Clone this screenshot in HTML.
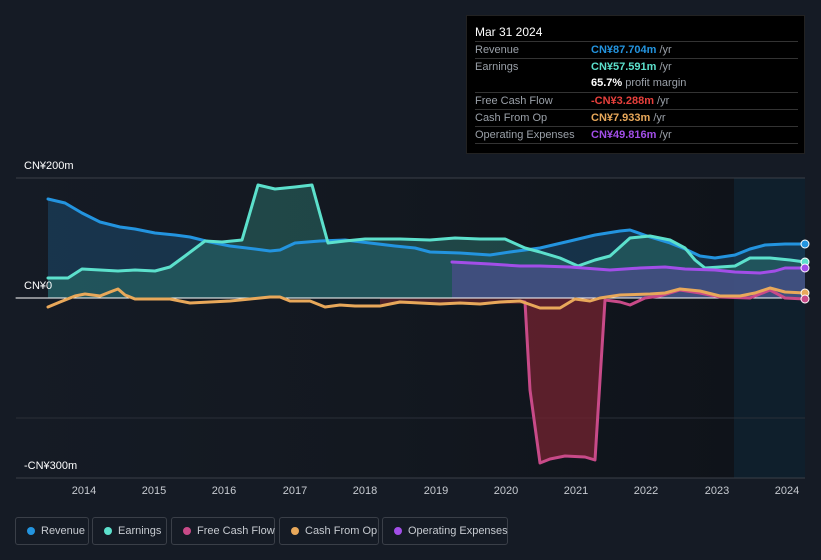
<!DOCTYPE html>
<html><head><meta charset="utf-8"><style>
html,body{margin:0;width:821px;height:560px;overflow:hidden}
body{background:#151b25;font-family:"Liberation Sans",sans-serif;position:relative}
.tt{position:absolute;left:466px;top:15px;width:339px;height:139px;background:#000;border:1px solid #222;box-sizing:border-box;color:#9aa0a8;font-size:11px}
.tt .h{color:#fff;font-size:12px;position:absolute;left:8px;top:9px}
.row{position:absolute;left:8px;right:6px;height:17px;border-top:1px solid #333;line-height:17px;white-space:nowrap}
.row .v{position:absolute;left:116px;top:0;font-weight:bold}
.row .v span{color:#9aa0a8;font-weight:normal}
.lg{position:absolute;top:517px;height:28px;border:1px solid #3a3f48;border-radius:3px;box-sizing:border-box;color:#c6cad0;font-size:11px;line-height:26px;padding-left:25px;white-space:nowrap}
.lg i{position:absolute;left:11px;top:9px;width:8px;height:8px;border-radius:50%}
.ax{position:absolute;color:#fff;font-size:11px}
.yr{position:absolute;top:485px;color:#c6cad0;font-size:11px;transform:translateX(-50%)}
</style></head><body>
<svg width="821" height="560" style="position:absolute;left:0;top:0">
<defs>
<linearGradient id="bg" x1="0" x2="1"><stop offset="0" stop-color="#151b25"/><stop offset="0.5" stop-color="#131820"/><stop offset="1" stop-color="#0f131a"/></linearGradient>
</defs>
<rect x="16" y="178" width="718" height="300" fill="url(#bg)"/>
<rect x="734" y="178" width="71" height="300" fill="#0f1f2c"/>
<line x1="16" y1="178" x2="805" y2="178" stroke="#3a3f48"/>
<line x1="16" y1="418" x2="805" y2="418" stroke="#2a2f38"/>
<line x1="16" y1="478" x2="805" y2="478" stroke="#3a3f48"/>
<path d="M48,199 L65,203 82,213 100,222 120,227 135,229 155,233 175,235 190,237 210,242 230,246 255,249 270,251 280,250 295,243 320,241 345,240 370,243 395,246 415,248 430,252 460,253 490,255 510,252 540,248 570,241 595,235 620,231 630,230 650,237 670,243 685,249 700,256 715,258 735,255 750,249 765,245 785,244 805,244 L805,298 48,298Z" fill="#1b4a6e" fill-opacity="0.55"/>
<path d="M48,278 L68,278 82,269 100,270 118,271 135,270 155,271 170,267 185,256 205,241 222,242 242,240 258,185 275,189 295,187 312,185 328,243 345,241 365,239 400,239 430,240 455,238 480,239 505,239 525,248 540,252 560,258 578,266 595,260 610,256 630,238 650,236 670,240 685,248 695,260 705,268 720,267 735,266 750,258 770,258 790,260 805,262 L805,298 48,298Z" fill="#2a6e68" fill-opacity="0.55"/>
<path d="M452,262 L490,264 520,266 540,266 570,267 610,270 640,268 665,267 685,269 715,270 735,272 760,273 775,271 785,268 805,268 L805,298 452,298Z" fill="#5a4a9a" fill-opacity="0.55"/>
<path d="M380,298 L525,298 530,390 540,463 550,459 565,456 585,457 595,460 605,300 605,298Z" fill="#6e2230" fill-opacity="0.8"/>
<rect x="380" y="298" width="145" height="6" fill="#4a2028"/>
<g fill="none" stroke-width="3" stroke-linejoin="round" stroke-linecap="round">
<path d="M48,199 L65,203 82,213 100,222 120,227 135,229 155,233 175,235 190,237 210,242 230,246 255,249 270,251 280,250 295,243 320,241 345,240 370,243 395,246 415,248 430,252 460,253 490,255 510,252 540,248 570,241 595,235 620,231 630,230 650,237 670,243 685,249 700,256 715,258 735,255 750,249 765,245 785,244 805,244" stroke="#2394df"/>
<path d="M48,278 L68,278 82,269 100,270 118,271 135,270 155,271 170,267 185,256 205,241 222,242 242,240 258,185 275,189 295,187 312,185 328,243 345,241 365,239 400,239 430,240 455,238 480,239 505,239 525,248 540,252 560,258 578,266 595,260 610,256 630,238 650,236 670,240 685,248 695,260 705,268 720,267 735,266 750,258 770,258 790,260 805,262" stroke="#5ce0cc"/>
<path d="M452,262 L490,264 520,266 540,266 570,267 610,270 640,268 665,267 685,269 715,270 735,272 760,273 775,271 785,268 805,268" stroke="#a24ee8"/>
<line x1="16" y1="298" x2="805" y2="298" stroke="#fff" stroke-width="1"/>
<path d="M520,301 L525,302 530,390 540,463 550,459 565,456 585,457 595,460 605,300 620,302 630,305 645,298 660,296 680,290 700,293 720,297 750,298 770,290 785,298 805,299" stroke="#c84a88"/>
<path d="M48,307 L60,302 75,296 85,294 100,296 110,292 118,289 125,295 135,299 170,299 190,303 210,302 230,301 250,299 270,297 280,297 290,301 310,301 325,307 340,305 355,306 380,306 400,302 420,303 440,304 460,303 480,304 500,302 520,301 540,308 560,308 575,299 590,301 600,298 620,295 650,294 665,293 680,289 700,291 720,296 740,296 755,293 770,288 785,292 805,293" stroke="#e8a85a"/>
</g>
<g stroke="#fff" stroke-width="1">
<circle cx="805" cy="244" r="4" fill="#2394df"/>
<circle cx="805" cy="262" r="4" fill="#5ce0cc"/>
<circle cx="805" cy="268" r="4" fill="#a24ee8"/>
<circle cx="805" cy="293" r="4" fill="#e8a85a"/>
<circle cx="805" cy="299" r="4" fill="#c84a88"/>
</g>
</svg>
<div class="ax" style="left:24px;top:160px">CN¥200m</div>
<div class="ax" style="left:24px;top:280px">CN¥0</div>
<div class="ax" style="left:24px;top:460px">-CN¥300m</div>
<div class="yr" style="left:84px">2014</div><div class="yr" style="left:154px">2015</div><div class="yr" style="left:224px">2016</div><div class="yr" style="left:295px">2017</div><div class="yr" style="left:365px">2018</div><div class="yr" style="left:436px">2019</div><div class="yr" style="left:506px">2020</div><div class="yr" style="left:576px">2021</div><div class="yr" style="left:646px">2022</div><div class="yr" style="left:717px">2023</div><div class="yr" style="left:787px">2024</div>
<div class="tt">
<div class="h">Mar 31 2024</div>
<div class="row" style="top:25px">Revenue<div class="v" style="color:#2394df">CN¥87.704m <span>/yr</span></div></div>
<div class="row" style="top:42px">Earnings<div class="v" style="color:#5ce0cc">CN¥57.591m <span>/yr</span></div></div>
<div class="row" style="top:59px;border-top:none"><div class="v" style="color:#fff">65.7% <span>profit margin</span></div></div>
<div class="row" style="top:76px">Free Cash Flow<div class="v" style="color:#e8403c">-CN¥3.288m <span>/yr</span></div></div>
<div class="row" style="top:93px">Cash From Op<div class="v" style="color:#e8a85a">CN¥7.933m <span>/yr</span></div></div>
<div class="row" style="top:110px">Operating Expenses<div class="v" style="color:#a24ee8">CN¥49.816m <span>/yr</span></div></div>
<div class="row" style="top:127px;height:0"></div>
</div>
<div class="lg" style="left:15px;width:74px"><i style="background:#2394df"></i>Revenue</div>
<div class="lg" style="left:92px;width:75px"><i style="background:#5ce0cc"></i>Earnings</div>
<div class="lg" style="left:171px;width:104px"><i style="background:#c84a88"></i>Free Cash Flow</div>
<div class="lg" style="left:279px;width:100px"><i style="background:#e8a85a"></i>Cash From Op</div>
<div class="lg" style="left:382px;width:126px"><i style="background:#a24ee8"></i>Operating Expenses</div>
</body></html>
